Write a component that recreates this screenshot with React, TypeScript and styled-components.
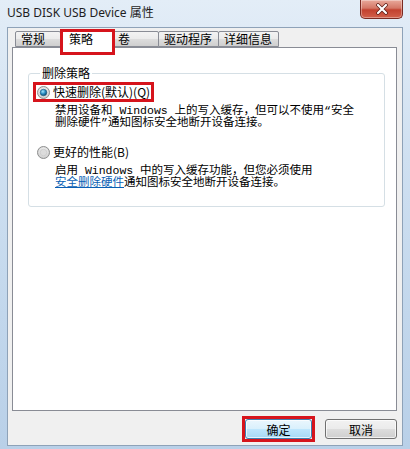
import React from 'react';
import styled, { createGlobalStyle } from 'styled-components';

const GlobalStyle = createGlobalStyle`
  html, body {
    margin: 0;
    padding: 0;
    background: #ffffff;
  }
  * {
    box-sizing: border-box;
  }
`;

const Window = styled.div`
  width: 410px;
  height: 449px;
  display: flex;
  flex-direction: column;
  padding: 0 7px 3px 7px;
  background: linear-gradient(180deg, #e3edf7 0%, #cfe0f1 35%, #c2d7ec 70%, #b9d0e8 100%);
  font-family: "Noto Sans CJK SC", sans-serif;
  color: #000;
`;

const TitleBar = styled.div`
  height: 27px;
  display: flex;
  align-items: flex-start;
`;

const Title = styled.div`
  margin-top: 5px;
  font-family: "Noto Sans", "Noto Sans CJK SC", sans-serif;
  font-size: 12px;
  line-height: 16px;
  color: #1e1e1e;
`;

const CloseButton = styled.div`
  margin-left: auto;
  width: 43px;
  height: 19px;
  display: flex;
  align-items: center;
  justify-content: center;
  border: 1px solid #7a2a22;
  border-top: none;
  border-radius: 0 0 5px 5px;
  background: linear-gradient(180deg, #e9a99b 0%, #d47766 45%, #c2412f 55%, #d2604b 100%);
  box-shadow: inset 0 0 0 1px rgba(255, 255, 255, 0.35);
`;

const Client = styled.div`
  flex: 1;
  display: flex;
  flex-direction: column;
  background: #f0f0f0;
  border: 1px solid #8ea2b8;
  padding: 0 5px 0 4px;
`;

const TabStrip = styled.div`
  margin-top: 1px;
  margin-bottom: -1px;
  height: 19px;
  display: flex;
  align-items: flex-end;
  padding-left: 3px;
  position: relative;
  z-index: 1;
`;

const Tab = styled.div<{ w: number; active?: boolean }>`
  position: relative;
  width: ${p => p.w}px;
  height: ${p => (p.active ? 19 : 16)}px;
  margin-bottom: ${p => (p.active ? 0 : 1)}px;
  margin-left: -1px;
  padding-left: ${p => (p.active ? 8 : 5)}px;
  display: flex;
  align-items: center;
  font-size: 12px;
  line-height: 14px;
  border: 1px solid #898c95;
  border-bottom: ${p => (p.active ? 'none' : '1px solid #898c95')};
  background: ${p => (p.active ? '#ffffff' : 'linear-gradient(180deg, #f3f3f3 0%, #ebebeb 50%, #dddddd 51%, #cfcfcf 100%)')};
  z-index: ${p => (p.active ? 2 : 1)};
  border-radius: 2px 2px 0 0;

  &:first-child {
    margin-left: 0;
  }
`;

const Highlight = styled.span<{ t: number; r: number; b: number; l: number }>`
  position: absolute;
  top: ${p => p.t}px;
  right: ${p => p.r}px;
  bottom: ${p => p.b}px;
  left: ${p => p.l}px;
  border: 3px solid #d6141c;
  pointer-events: none;
  z-index: 5;
`;

const Panel = styled.div`
  flex: 1;
  background: #ffffff;
  border: 1px solid #898c95;
  padding: 18px 11px 0 15px;
`;

const GroupBox = styled.fieldset`
  margin: 0;
  padding: 5px 8px 17px 8px;
  border: 1px solid #d5dfe5;
  border-radius: 3px;
  min-width: 0;
`;

const Legend = styled.legend`
  margin-left: 3px;
  padding: 0 2px;
  font-size: 12px;
  line-height: 14px;
`;

const RadioRow = styled.div`
  position: relative;
  display: inline-flex;
  align-items: center;
  gap: 3px;
  height: 14px;
  font-size: 12px;
  line-height: 14px;
`;

const Option = styled.div<{ gap: number }>`
  display: flex;
  flex-direction: column;
  align-items: flex-start;
  margin-top: ${p => p.gap}px;
`;

const Description = styled.div`
  margin-top: 6px;
  padding-left: 18px;
  font-family: "Liberation Mono", "Noto Sans CJK SC", monospace;
  font-size: 11.5px;
  line-height: 12px;
  white-space: nowrap;
`;

const Link = styled.span`
  color: #0a5fb4;
  text-decoration: underline;
`;

const ButtonRow = styled.div`
  height: 34px;
  display: flex;
  justify-content: flex-end;
  align-items: flex-start;
  gap: 13px;
  padding: 8px 0 0 0;
`;

const Button = styled.div<{ w: number; primary?: boolean }>`
  position: relative;
  width: ${p => p.w}px;
  height: 20px;
  display: flex;
  align-items: center;
  justify-content: center;
  font-size: 12px;
  border-radius: 3px;
  border: 1px solid ${p => (p.primary ? '#3c7fb1' : '#707070')};
  background: ${p =>
    p.primary
      ? 'linear-gradient(180deg, #eaf6fd 0%, #d9f0fc 50%, #bee6fd 51%, #a7d9f5 100%)'
      : 'linear-gradient(180deg, #f2f2f2 0%, #ebebeb 50%, #dddddd 51%, #cfcfcf 100%)'};
  box-shadow: inset 0 0 0 1px rgba(255, 255, 255, 0.7);
`;

const Radio: React.FC<{ checked?: boolean }> = ({ checked }) => (
  <svg width="13" height="13" viewBox="0 0 13 13">
    <defs>
      <radialGradient id={checked ? 'rbgOn' : 'rbgOff'} cx="50%" cy="40%" r="60%">
        <stop offset="0%" stopColor="#ffffff" />
        <stop offset="100%" stopColor="#c9c9c9" />
      </radialGradient>
      <radialGradient id="rdot" cx="40%" cy="35%" r="65%">
        <stop offset="0%" stopColor="#a6e3fb" />
        <stop offset="55%" stopColor="#2a8fc4" />
        <stop offset="100%" stopColor="#0b4a72" />
      </radialGradient>
    </defs>
    <circle cx="6.5" cy="6.5" r="6" fill={`url(#${checked ? 'rbgOn' : 'rbgOff'})`} stroke="#8e8f8f" strokeWidth="1" />
    {checked ? (
      <circle cx="6.5" cy="6.5" r="3.3" fill="url(#rdot)" stroke="#1c5b80" strokeWidth="0.6" />
    ) : (
      <circle cx="6.5" cy="6.5" r="3.3" fill="#dcdcdc" stroke="#c4c4c4" strokeWidth="0.6" />
    )}
  </svg>
);

const CloseIcon = () => (
  <svg width="14" height="12" viewBox="0 0 14 12">
    <path d="M3 2 L11 10 M11 2 L3 10" stroke="#5a1a14" strokeWidth="3.6" strokeLinecap="round" />
    <path d="M3 2 L11 10 M11 2 L3 10" stroke="#ffffff" strokeWidth="2.2" strokeLinecap="round" />
  </svg>
);

const tabs = [
  { label: '常规', w: 46 },
  { label: '策略', w: 53, active: true },
  { label: '卷', w: 47 },
  { label: '驱动程序', w: 61 },
  { label: '详细信息', w: 61 },
];

export default function App() {
  return (
    <>
      <GlobalStyle />
      <Window>
        <TitleBar>
          <Title>USB DISK USB Device 属性</Title>
          <CloseButton>
            <CloseIcon />
          </CloseButton>
        </TitleBar>
        <Client>
          <TabStrip>
            {tabs.map(t => (
              <Tab key={t.label} w={t.w} active={t.active}>
                {t.label}
                {t.active && <Highlight t={-1} r={-3} b={-7} l={-1} />}
              </Tab>
            ))}
          </TabStrip>
          <Panel>
            <GroupBox>
              <Legend>删除策略</Legend>
              <Option gap={0}>
                <RadioRow>
                  <Radio checked />
                  快速删除(默认)(Q)
                  <Highlight t={-3} r={-4} b={-3} l={-4} />
                </RadioRow>
                <Description>
                  禁用设备和 Windows 上的写入缓存，但可以不使用“安全
                  <br />
                  删除硬件”通知图标安全地断开设备连接。
                </Description>
              </Option>
              <Option gap={16}>
                <RadioRow>
                  <Radio />
                  更好的性能(B)
                </RadioRow>
                <Description>
                  启用 Windows 中的写入缓存功能，但您必须使用
                  <br />
                  <Link>安全删除硬件</Link>通知图标安全地断开设备连接。
                </Description>
              </Option>
            </GroupBox>
          </Panel>
          <ButtonRow>
            <Button w={67} primary>
              确定
              <Highlight t={-4} r={-4} b={-4} l={-4} />
            </Button>
            <Button w={72}>取消</Button>
          </ButtonRow>
        </Client>
      </Window>
    </>
  );
}
